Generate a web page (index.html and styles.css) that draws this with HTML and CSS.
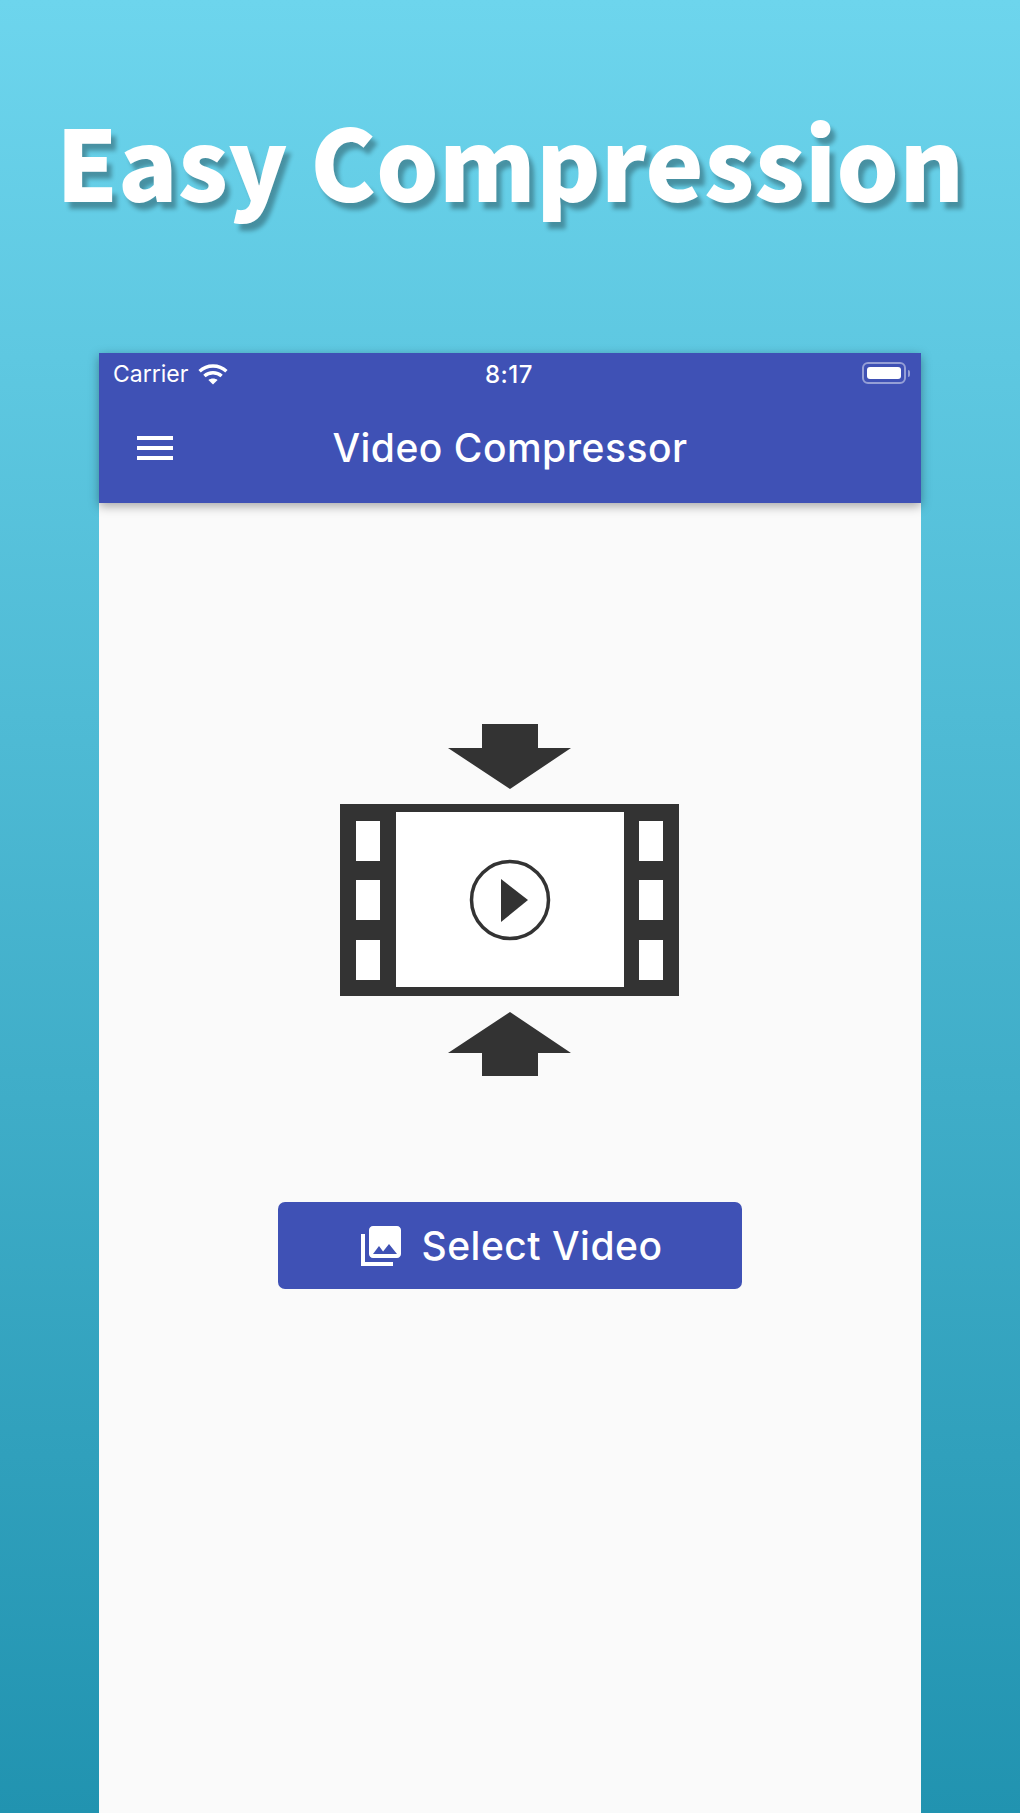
FILE: index.html
```html
<!DOCTYPE html>
<html lang="en">
<head>
    <meta charset="UTF-8">
    <meta name="viewport" content="width=device-width, initial-scale=1.0">
    <title>Easy Compression</title>
    <link rel="stylesheet" href="styles.css">
</head>
<body>
    <h1 class="headline">Easy Compression</h1>

    <div class="phone">
        <header class="app-header">
            <!-- Status bar -->
            <div class="status-bar">
                <div class="status-left">
                    <span>Carrier</span>
                    <svg class="wifi" viewBox="0 0 30 21" fill="none" stroke="#fff" stroke-width="3.4">
                        <path d="M1.6 7.2C9 .3 21 .3 28.4 7.2"/>
                        <path d="M6.4 12C11.2 7.7 18.8 7.7 23.6 12"/>
                        <path d="M15 20.6l-4.6-4.7c2.6-2 6.600-2 9.200 0z" fill="#fff" stroke="none"/>
                    </svg>
                </div>
                <span class="status-time">8:17</span>
                <div class="status-right">
                    <div class="battery"><div class="battery-level"></div></div>
                    <div class="battery-nub"></div>
                </div>
            </div>

            <!-- Toolbar -->
            <div class="toolbar">
                <svg class="menu-icon" viewBox="0 0 24 24" fill="#fff">
                    <path d="M3 18h18v-2H3v2zm0-5h18v-2H3v2zm0-7v2h18V6H3z"/>
                </svg>
                <span class="toolbar-title">Video Compressor</span>
            </div>
        </header>

        <main class="content">
            <svg class="logo" viewBox="340 724 340 352">
                <path class="ink" d="M482 724h56v24h33l-61 41-62-41h34z"/>
                <path class="ink" d="M510 1012l61 41h-33v23h-56v-23h-34z"/>
                <rect class="ink" x="340" y="804" width="339" height="192"/>
                <rect class="hole" x="396" y="812" width="228" height="175"/>
                <rect class="hole" x="356" y="821" width="24" height="40"/>
                <rect class="hole" x="356" y="880" width="24" height="40"/>
                <rect class="hole" x="356" y="940" width="24" height="40"/>
                <rect class="hole" x="639" y="821" width="24" height="40"/>
                <rect class="hole" x="639" y="880" width="24" height="40"/>
                <rect class="hole" x="639" y="940" width="24" height="40"/>
                <circle cx="510" cy="900" r="38.5" fill="none" stroke="#333" stroke-width="3.5"/>
                <path class="ink" d="M501 879l27 21-27 22z"/>
            </svg>

            <button class="select-btn" type="button">
                <svg class="btn-icon" viewBox="0 0 24 24" fill="#fff">
                    <path d="M22 16V4c0-1.100-.9-2-2-2H8c-1.100 0-2 .9-2 2v12c0 1.100.9 2 2 2h12c1.100 0 2-.9 2-2zm-11-4l2.030 2.710L16 11l4 5H8l3-4zM2 6v16h16v-2H4V6H2z"/>
                </svg>
                <span>Select Video</span>
            </button>
        </main>
    </div>
</body>
</html>
```

FILE: styles.css
```css
* {
    box-sizing: border-box;
}

body {
    margin: 0;
    height: 1813px;
    overflow: hidden;
    display: flex;
    flex-direction: column;
    align-items: center;
    background: linear-gradient(to bottom, #6dd5ed, #2193b0);
    font-family: "Inter", "Roboto", sans-serif;
    color: white;
}

.headline {
    margin: 0;
    height: 353px;
    padding-top: 86px;
    font-family: "Noto Sans CJK JP", "Noto Sans", sans-serif;
    font-size: 98.6px;
    line-height: 146px;
    font-weight: 900;
    white-space: nowrap;
    text-shadow: 5px 7px 4px rgba(0, 0, 0, 0.3);
}

.phone {
    width: 822px;
    flex: 1;
    display: flex;
    flex-direction: column;
    background-color: #fafafa;
}

.app-header {
    height: 150px;
    background-color: #3f51b5;
    box-shadow: 0 3px 10px rgba(0, 0, 0, 0.35);
}

.status-bar {
    display: grid;
    grid-template-columns: 1fr auto 1fr;
    align-items: center;
    height: 42px;
    padding: 0 11px 0 14px;
    font-size: 23px;
}

.status-left {
    display: flex;
    align-items: center;
    gap: 10px;
}

.status-time {
    margin-right: 5px;
    font-size: 24px;
    font-weight: 500;
    letter-spacing: 0.5px;
}

.wifi {
    width: 30px;
    height: 21px;
}

.status-right {
    display: flex;
    align-items: center;
    justify-content: flex-end;
    gap: 2px;
    padding-bottom: 2px;
}

.battery {
    width: 44px;
    height: 22px;
    padding: 3px;
    border: 2px solid rgba(255, 255, 255, 0.45);
    border-radius: 6px;
}

.battery-level {
    height: 100%;
    background-color: white;
    border-radius: 3px;
}

.battery-nub {
    width: 2px;
    height: 7px;
    background-color: rgba(255, 255, 255, 0.45);
    border-radius: 0 2px 2px 0;
}

.toolbar {
    position: relative;
    height: 108px;
    display: flex;
    align-items: center;
    justify-content: center;
    padding-bottom: 3px;
}

.menu-icon {
    position: absolute;
    left: 32px;
    top: 29px;
    width: 48px;
    height: 48px;
}

.toolbar-title {
    font-size: 39px;
    font-weight: 500;
    letter-spacing: 0.5px;
}

.content {
    flex: 1;
    display: flex;
    flex-direction: column;
    align-items: center;
    padding-top: 221px;
}

.logo {
    width: 340px;
    height: 352px;
    margin-bottom: 126px;
}

.ink {
    fill: #333;
}

.hole {
    fill: white;
}

.select-btn {
    width: 464px;
    height: 87px;
    display: flex;
    align-items: center;
    justify-content: center;
    gap: 16px;
    border: none;
    border-radius: 7px;
    background-color: #3f51b5;
    color: white;
    font-family: inherit;
    font-size: 39px;
    font-weight: 500;
    letter-spacing: 0.5px;
    cursor: pointer;
}

.btn-icon {
    width: 48px;
    height: 48px;
}
```
